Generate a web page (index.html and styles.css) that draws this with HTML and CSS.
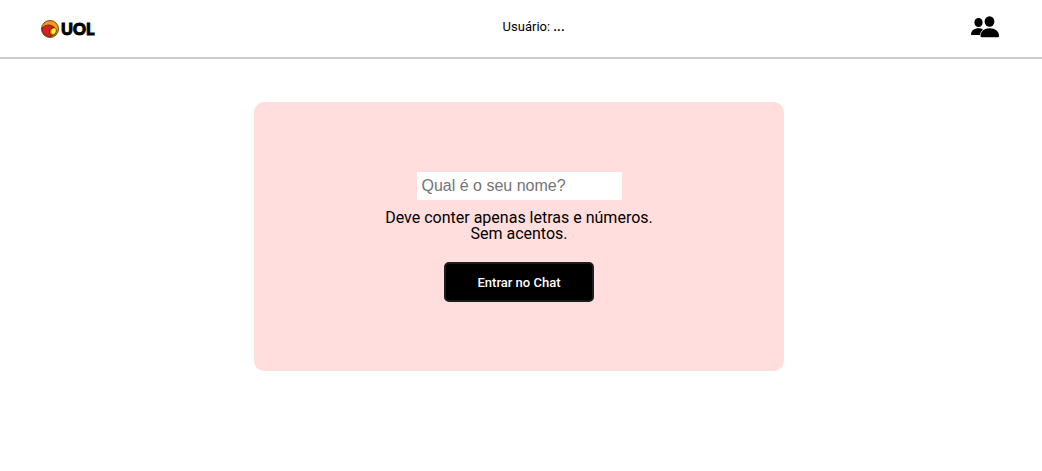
FILE: index.html
```html
<!DOCTYPE html>
<html lang="pt-BR">
<head>
<meta charset="utf-8">
<meta name="viewport" content="width=device-width, initial-scale=1">
<title>Chat UOL</title>
<link rel="stylesheet" href="styles.css">
</head>
<body>
<header class="topbar">
  <div class="logo">
    <svg class="logo-mark" viewBox="0 0 18 18" aria-hidden="true">
      <circle cx="9" cy="9" r="8.500" fill="#f59a16" stroke="#5a2a08" stroke-width=".8"/>
      <path d="M1 8C4 4.500 9 4 12.500 6.500C15 8.500 14.500 14 10.500 16.500C5 17.500 1 13.500 1 8Z" fill="#d9201c" stroke="#3a1208" stroke-width=".6"/>
      <path d="M8.500 12C8.500 9 10.500 7.500 13 8C16 8.500 15.800 12 14 14.300C12 16 9 15.500 8.500 12Z" fill="#f58a18" stroke="#3a1208" stroke-width=".7"/>
      <ellipse cx="12.600" cy="11.200" rx="2.500" ry="3.300" transform="rotate(20 12.600 11.200)" fill="#fff02a" stroke="#4a3008" stroke-width=".4"/>
    </svg>
    <span class="logo-name">UOL</span>
  </div>
  <p class="user">Usuário: <strong>...</strong></p>
  <button class="people" type="button" aria-label="Participantes">
    <svg class="people-icon" viewBox="0 0 28 22" aria-hidden="true">
      <ellipse cx="7.500" cy="6.500" rx="4.100" ry="4.500"/>
      <path d="M0 18.600C0 14.500 3.200 12.200 7.200 12.200C9.200 12.200 10.800 12.600 12 13.400C10.300 14.900 9.200 16.700 8.900 19H.8C.2 19 0 18.900 0 18.600Z"/>
      <ellipse cx="18.500" cy="5.500" rx="4.900" ry="5.200"/>
      <path d="M9.500 20C9.500 15.300 13.400 12.300 18.700 12.300C24 12.300 28 15.300 28 20C28 20.800 27.500 21.200 26.700 21.200H10.800C10 21.200 9.500 20.800 9.500 20Z"/>
    </svg>
  </button>
</header>
<main class="page">
  <form class="card">
    <input class="name" id="name" type="text" placeholder="Qual é o seu nome?" aria-describedby="hint" aria-label="Qual é o seu nome?">
    <label class="hint" id="hint" for="name">Deve conter apenas letras e números.<br>Sem acentos.</label>
    <button class="enter" type="button">Entrar no Chat</button>
  </form>
</main>
</body>
</html>
```
FILE: styles.css
```css
* {
  box-sizing: border-box;
}

body {
  margin: 0;
  background: #fff;
  color: #000;
  font-family: Roboto, "Liberation Sans", sans-serif;
}

.topbar {
  display: flex;
  align-items: center;
  justify-content: space-between;
  padding: 14px 43px 18px 41px;
  border-bottom: 2px solid #ccc;
}

.logo {
  display: flex;
  align-items: center;
  gap: 2px;
  padding-top: 4px;
}

.logo-mark {
  width: 18px;
  height: 18px;
}

.logo-name {
  font: 900 16px/19px Lato, sans-serif;
  -webkit-text-stroke: 1px #000;
}

.user {
  margin: 0;
  padding-left: 2px;
  font-size: 13px;
  line-height: 16px;
}

.people {
  display: flex;
  padding: 2px 0 1px;
  border: 0;
  background: none;
}

.people-icon {
  width: 28px;
  height: 22px;
}

.page {
  padding: 43px 4px 0 0;
}

.card {
  display: flex;
  flex-direction: column;
  align-items: center;
  width: 100%;
  max-width: 530px;
  margin: 0 auto;
  padding: 70px 20px 69px;
  border-radius: 10px;
  background: #ffdedd;
}

.name {
  width: 205px;
  height: 28px;
  padding: 0 5px;
  border: 0;
  background: #fff;
  font: 16px "Liberation Sans", sans-serif;
}

.name::placeholder {
  color: #757575;
}

.hint {
  margin: 10px 0 20px;
  font-size: 16px;
  line-height: 16px;
  text-align: center;
}

.enter {
  width: 150px;
  height: 40px;
  border: 2px solid #1c1c1c;
  border-radius: 5px;
  background: #000;
  color: #fff;
  font: 500 13px Roboto, sans-serif;
}
```
